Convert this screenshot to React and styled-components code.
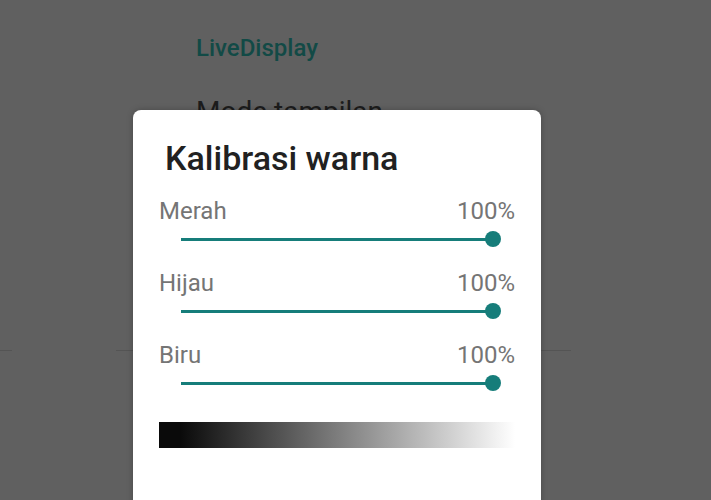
import React from 'react'
import styled, { createGlobalStyle } from 'styled-components'

const GlobalStyle = createGlobalStyle`
  html, body {
    margin: 0;
    padding: 0;
    height: 500px;
    overflow: hidden;
    background: #606060;
    font-family: Roboto, "Noto Sans", sans-serif;
  }
`

const Screen = styled.div`
  position: relative;
  width: 711px;
  height: 500px;
  background: #606060;
  overflow: hidden;
`

const Settings = styled.div`
  display: flex;
  flex-direction: column;
  padding-top: 34px;
`

const Category = styled.div`
  padding-left: 196px;
  font-size: 24px;
  font-weight: 500;
  line-height: 28px;
  color: #124a46;
`

const Pref = styled.div`
  padding: 33px 0 0 196px;
  font-size: 28px;
  line-height: 34px;
  color: #1c1c1c;
  height: 200px;
`

const DividerRow = styled.div`
  display: flex;
  justify-content: space-between;
  margin-top: 55px;
`

const Divider = styled.div`
  height: 1px;
  width: ${p => p.$w}px;
  margin-right: ${p => p.$mr || 0}px;
  background: #545454;
`

const Dialog = styled.div`
  position: absolute;
  left: 133px;
  top: 110px;
  width: 408px;
  height: 420px;
  background: #fff;
  border-radius: 8px;
  box-shadow: 0 0 6px rgba(0, 0, 0, 0.25);
  padding: 28px 26px 0;
  box-sizing: border-box;
  display: flex;
  flex-direction: column;
`

const Title = styled.div`
  padding-left: 6px;
  font-size: 34px;
  font-weight: 500;
  line-height: 40px;
  color: #212121;
  margin-bottom: 20px;
`

const Channel = styled.div`
  display: flex;
  flex-direction: column;
  margin-bottom: 17px;
`

const LabelRow = styled.div`
  display: flex;
  justify-content: space-between;
  font-size: 24px;
  line-height: 26px;
  color: #757575;
  margin-bottom: 1px;
`

const Slider = styled.div`
  position: relative;
  height: 28px;
  margin: 0 22px;
  display: flex;
  align-items: center;
`

const Track = styled.div`
  width: 100%;
  height: 3px;
  background: #167d7a;
`

const Thumb = styled.div`
  position: absolute;
  top: 50%;
  width: 16px;
  height: 16px;
  border-radius: 50%;
  background: #167d7a;
  transform: translate(-50%, -50%);
`

const Gradient = styled.div`
  margin-top: 8px;
  height: 26px;
  background: linear-gradient(to right, #0a0a0a 0%, #0a0a0a 6%, #ffffff 100%);
`

const channels = [
  { name: 'Merah', value: 100 },
  { name: 'Hijau', value: 100 },
  { name: 'Biru', value: 100 },
]

export default function App() {
  return (
    <>
      <GlobalStyle />
      <Screen>
        <Settings>
          <Category>LiveDisplay</Category>
          <Pref>Mode tampilan</Pref>
          <DividerRow>
            <Divider $w={12} />
            <Divider $w={455} $mr={140} />
          </DividerRow>
        </Settings>
        <Dialog>
          <Title>Kalibrasi warna</Title>
          {channels.map(c => (
            <Channel key={c.name}>
              <LabelRow>
                <span>{c.name}</span>
                <span>{c.value}%</span>
              </LabelRow>
              <Slider>
                <Track />
                <Thumb style={{ left: `${c.value}%` }} />
              </Slider>
            </Channel>
          ))}
          <Gradient />
        </Dialog>
      </Screen>
    </>
  )
}
